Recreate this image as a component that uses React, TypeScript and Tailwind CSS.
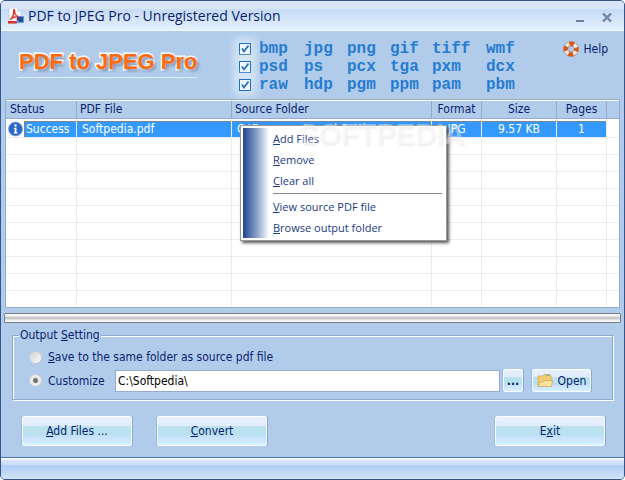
import React from "react";

const formats = [
  ["bmp", "jpg", "png", "gif", "tiff", "wmf"],
  ["psd", "ps", "pcx", "tga", "pxm", "dcx"],
  ["raw", "hdp", "pgm", "ppm", "pam", "pbm"],
];

const emptyRows = [1, 2, 3, 4, 5, 6, 7, 8, 9];

const raised =
  "flex items-center justify-center rounded-[2px] border border-[#fbfdff] bg-[linear-gradient(180deg,#e8f0fe_0%,#e2ecfd_33%,#b9e2ee_34%,#b9e2ee_66%,#c5deff_67%,#d6f1ff_100%)] shadow-[1px_0_0_#86a9d2,-1px_0_0_#9dbbe0]";

function PdfIcon() {
  return (
    <svg width="16" height="16" viewBox="0 0 16 16" aria-hidden="true">
      <path d="M1 0h8l4 4v11H1z" fill="#fff" stroke="#b9bfc9" strokeWidth=".6" />
      <path d="M9 0l4 4H9z" fill="#d9dde4" />
      <path d="M0 13h9v2.500H0z" fill="#d8302a" />
      <path d="M2 11.500c3-2 4-5 3.600-9 0-1 1-1 1 0C6.600 6 8 8 10 8.500 8 8.500 5 9 2 11.500z" fill="none" stroke="#e0392c" strokeWidth="1.300" />
      <path d="M8.500 8H16v7H8.500z" fill="#6d9bd8" />
      <path d="M9 8.500h3v4H9z" fill="#8b2d3a" />
      <path d="M10 12l2-3h3v5h-4z" fill="#254d9c" />
    </svg>
  );
}

function LifeRing() {
  return (
    <svg width="16" height="16" viewBox="0 0 16 16" aria-hidden="true">
      <circle cx="8" cy="8" r="5.300" fill="none" stroke="#a08e7d" strokeWidth="5" />
      <circle cx="8" cy="8" r="5.300" fill="none" stroke="#f3ece4" strokeWidth="3.800" />
      <circle cx="8" cy="8" r="5.300" fill="none" stroke="#d9591a" strokeWidth="4.400" strokeDasharray="4.800 3.525" strokeDashoffset="2.400" />
    </svg>
  );
}

function InfoIcon() {
  return (
    <svg width="16" height="16" viewBox="0 0 16 16" aria-hidden="true">
      <circle cx="7.500" cy="8" r="7" fill="#2b66c9" stroke="#7fa6de" strokeWidth=".8" />
      <circle cx="7.500" cy="4.500" r="1.200" fill="#fff" />
      <path d="M5.800 6.700h2.700v4.600h1v1.200H5.800v-1.200h.9V7.900h-.9z" fill="#fff" />
    </svg>
  );
}

function FolderIcon() {
  return (
    <svg width="17" height="15" viewBox="0 0 17 15" aria-hidden="true">
      <path d="M1 13V3h5l1-1.500h6L14 3v9z" fill="#f0cf73" stroke="#d3a94e" strokeWidth=".8" />
      <path d="M9.500 2h3v1h-3z" fill="#5aa9dc" />
      <path d="M1.500 13.500l1-4.500h4L8 7.500h7.500l-1 6z" fill="#fae3a0" stroke="#d6aa50" strokeWidth=".8" />
    </svg>
  );
}

function Tick(props: { label: string }) {
  return (
    <span className="relative h-3 w-3">
      <input
        type="checkbox"
        defaultChecked
        aria-label={props.label}
        className="peer block h-3 w-3 appearance-none border border-[#1f6fc4] bg-[#f1f7fe] shadow-[0_0_7px_5px_rgba(225,238,252,0.7)]"
      />
      <svg width="12" height="12" viewBox="0 0 12 12" aria-hidden="true" className="pointer-events-none absolute inset-0 hidden peer-checked:block">
        <path d="M3 5.500l2 3 4.500-6" fill="none" stroke="#1f6fc4" strokeWidth="1.800" />
      </svg>
    </span>
  );
}

function Radio(props: { id: string; checked?: boolean }) {
  return (
    <input
      id={props.id}
      type="radio"
      name="output"
      defaultChecked={props.checked}
      className="h-[13px] w-[13px] shrink-0 appearance-none rounded-full border border-[#c9cdd3] bg-[linear-gradient(135deg,#d2d2d2,#fafafa)] checked:bg-[radial-gradient(circle,#666_0,#777_2px,#e4e4e4_3px,#f4f4f4_6px)]"
    />
  );
}

function MenuItem(props: { first: string; rest: string }) {
  return (
    <button role="menuitem" className="block h-[21px] w-full pl-[2px] text-left">
      <u>{props.first}</u>
      {props.rest}
    </button>
  );
}

export default function App() {
  const th = "border-r border-b border-[#93abcc] pb-px font-normal";
  const td = "border-r border-b border-[#ececec] p-0";
  const hit = "border-t border-dotted border-t-[#c0722a] bg-[#3399ff] text-white";
  return (
    <div className="flex min-h-screen flex-col overflow-hidden rounded-[5px] border border-[#34558a] bg-[#b1ccea] font-['DejaVu_Sans_Condensed','DejaVu_Sans',sans-serif] text-[12px] leading-4 text-[#0b1d6e]">
      <header className="flex h-[30px] items-center border-b border-[#f6faff] bg-[linear-gradient(180deg,#dae5f8_0%,#d8e4f8_26%,#c5dbf5_30%,#e4f0fc_100%)] pl-[7px] pr-3">
        <PdfIcon />
        <h1 className="ml-1 flex-1 font-['Open_Sans','Noto_Sans',sans-serif] text-[14px] leading-5">PDF to JPEG Pro - Unregistered Version</h1>
        <button aria-label="Minimize" className="mr-[18px] flex h-4 w-2 items-end pb-[2px]">
          <span className="h-[2px] w-full bg-[#6a7f9f]" />
        </button>
        <button aria-label="Close" className="flex h-4 w-[10px] items-end pb-[2px]">
          <svg width="10" height="9" viewBox="0 0 10 9">
            <path d="M1 .5l8 8M9 .5l-8 8" stroke="#6f87a8" strokeWidth="2.400" />
          </svg>
        </button>
      </header>

      <section className="flex h-[68px] pl-4">
        <div className="mt-[17px] h-[30px] w-[180px] shrink-0 border-b border-[#e3eefb] pl-[2px] font-['Liberation_Sans',Arial,sans-serif] text-[22px] font-bold leading-7 whitespace-nowrap text-[#ff6a0d] [-webkit-text-stroke:3px_#fff] [paint-order:stroke_fill] [text-shadow:2px_2px_3px_#7189a8]">
          PDF to JPEG Pro
        </div>
        <div className="ml-[42px] mt-[9px] flex flex-col">
          {formats.map((row) => (
            <div key={row[0]} className="flex h-[18px] items-center">
              <Tick label={row.join(" ")} />
              <div className="ml-2 grid grid-cols-[45px_43px_43px_42px_54px_40px] font-['Liberation_Mono','Courier_New',monospace] text-[16px] font-bold leading-[18px] text-[#267bd2]">
                {row.map((f) => (
                  <span key={f}>{f}</span>
                ))}
              </div>
            </div>
          ))}
        </div>
        <button className="ml-auto mr-4 mt-[10px] flex h-4 items-center gap-1">
          <LifeRing />
          Help
        </button>
      </section>

      <main className="relative mx-1 h-[209px] overflow-hidden border border-[#93abcc] bg-white pt-px">
        <table className="w-full table-fixed border-separate border-spacing-0">
          <colgroup>
            <col className="w-[71px]" />
            <col className="w-[155px]" />
            <col className="w-[200px]" />
            <col className="w-[50px]" />
            <col className="w-[75px]" />
            <col className="w-[50px]" />
            <col />
          </colgroup>
          <thead>
            <tr className="h-[18px] bg-[#b1ccea]">
              <th className={th + " pl-1 text-left"}>Status</th>
              <th className={th + " pl-[3px] text-left"}>PDF File</th>
              <th className={th + " pl-[3px] text-left"}>Source Folder</th>
              <th className={th}>Format</th>
              <th className={th}>Size</th>
              <th className={th}>Pages</th>
              <th className="border-b border-[#93abcc]" />
            </tr>
          </thead>
          <tbody>
            <tr className="h-[2px]">
              <td colSpan={7} className="p-0" />
            </tr>
            <tr className="h-[17px] leading-[15px] whitespace-nowrap">
              <td className={td}>
                <div className="flex pl-[2px]">
                  <InfoIcon />
                  <span className={hit + " flex-1 border-l border-l-[#c0722a] pl-px"}>Success</span>
                </div>
              </td>
              <td className={td}><div className={hit + " pl-[5px]"}>Softpedia.pdf</div></td>
              <td className={td}><div className={hit + " overflow-hidden pl-[5px]"}>C:\Documents and Settings\</div></td>
              <td className={td}><div className={hit + " text-center"}>JPG</div></td>
              <td className={td}><div className={hit + " text-center"}>9.57 KB</div></td>
              <td className={td}><div className={hit + " text-center"}>1</div></td>
              <td className="border-b border-[#ececec]" />
            </tr>
            {emptyRows.map((n) => (
              <tr key={n} className="h-[17px]">
                <td className={td} />
                <td className={td} />
                <td className={td} />
                <td className={td} />
                <td className={td} />
                <td className={td} />
                <td className="border-b border-[#ececec]" />
              </tr>
            ))}
            <tr className="h-[17px]">
              <td className={td} />
              <td className={td} />
              <td className={td} />
              <td className={td} />
              <td className={td} />
              <td className={td} />
              <td />
            </tr>
          </tbody>
        </table>

        <div role="menu" className="absolute left-[234px] top-[25px] flex h-[116px] w-[207px] border border-[#979797] bg-white p-[2px] font-['Open_Sans','Noto_Sans',sans-serif] text-[#1a3b85] shadow-[2px_2px_3px_#555]">
          <div className="w-[26px] bg-[linear-gradient(90deg,#21448f,#8ea3ca_55%,#fff)]" />
          <div className="flex-1 pl-[2px] text-[11px]">
            <MenuItem first="A" rest="dd Files" />
            <MenuItem first="R" rest="emove" />
            <MenuItem first="C" rest="lear all" />
            <hr className="my-[2px] ml-[2px] mr-[2px] border-[#858585]" />
            <MenuItem first="V" rest="iew source PDF file" />
            <MenuItem first="B" rest="rowse output folder" />
          </div>
        </div>
        <div className="pointer-events-none absolute left-[293px] top-[18px] font-['Liberation_Sans',Arial,sans-serif] text-[29px] font-bold leading-8 text-white/40 [text-shadow:1px_2px_2px_rgba(120,120,120,0.12)]">
          SOFTPEDIA
        </div>
      </main>

      <div role="progressbar" aria-valuenow={0} className="mx-[3px] mt-[5px] h-[10px] rounded-[1px] border border-[#777d86] bg-[linear-gradient(180deg,#fff_0%,#eee_25%,#bdbdbd_50%,#ececec_75%,#fff_100%)]" />

      <fieldset className="mx-[11px] mt-1 h-[73px] border border-[#8fa9cc] px-4 shadow-[1px_1px_0_#fff,inset_1px_1px_0_#fff]">
        <legend className="-ml-[10px] bg-[#b1ccea] px-px">
          Output <u>S</u>etting
        </legend>
        <div className="mt-[6px] flex h-4 items-center gap-[6px]">
          <Radio id="same" />
          <label htmlFor="same">
            <u>S</u>ave to the same folder as source pdf file
          </label>
        </div>
        <div className="mt-1 flex h-[23px] items-center">
          <Radio id="custom" checked />
          <label htmlFor="custom" className="ml-[6px] w-[67px]">Customize</label>
          <input
            aria-label="Output folder"
            defaultValue={"C:\\Softpedia\\"}
            className="h-[22px] min-w-0 flex-1 border border-[#93abcc] bg-white px-[2px] text-black outline-none"
          />
          <button className={raised + " ml-[3px] h-[23px] w-5 font-bold"}>...</button>
          <button className={raised + " ml-[9px] mr-[5px] h-[23px] w-[59px] gap-1"}>
            <FolderIcon />
            Open
          </button>
        </div>
      </fieldset>

      <div className="mb-[11px] mt-4 flex h-[30px] pl-[21px] pr-[19px]">
        <button className={raised + " w-[110px]"}>
          <span><u>A</u>dd Files ...</span>
        </button>
        <button className={raised + " ml-[25px] w-[110px]"}>
          <span><u>C</u>onvert</span>
        </button>
        <button className={raised + " ml-auto w-[110px]"}>
          <span>E<u>x</u>it</span>
        </button>
      </div>

      <footer className="mt-auto h-[22px] border-t border-[#4b74ac] bg-[linear-gradient(180deg,#fff_0,#fff_1px,#dbe8fb_2px,#c6dbf8_7px,#aecdf5_8px,#d3e4f8_100%)]" />
    </div>
  );
}
